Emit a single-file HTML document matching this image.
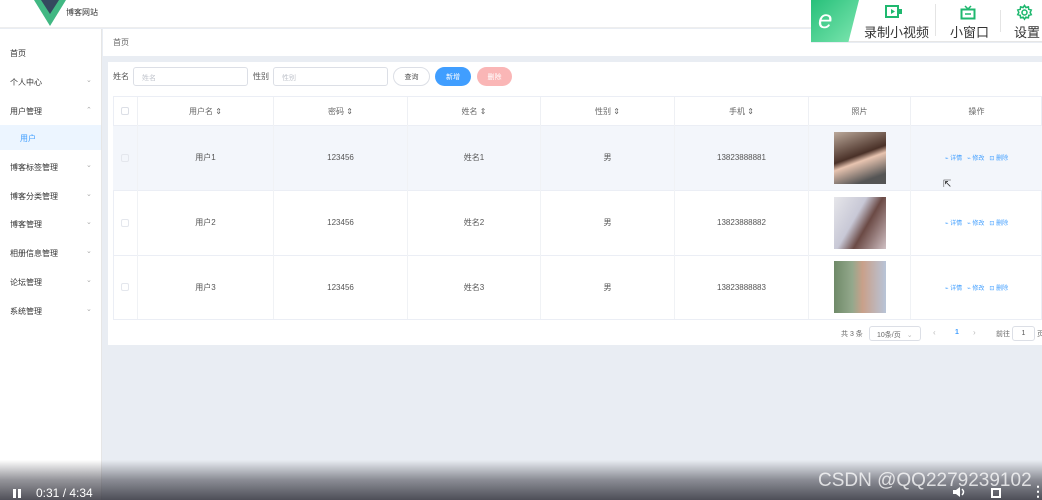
<!DOCTYPE html>
<html><head><meta charset="utf-8"><style>
*{margin:0;padding:0;box-sizing:border-box}
html,body{width:1042px;height:500px;overflow:hidden}
body{background:#e9edf3;font-family:"Liberation Sans","Noto Sans CJK SC",sans-serif;font-size:8px;color:#555;position:relative;white-space:nowrap}
.a{position:absolute}
.c{display:flex;align-items:center;justify-content:center}
.side div.i{position:absolute;left:10px;font-size:8px;color:#333}
.side span.ar{position:absolute;left:86px;color:#aaa;font-size:7px}
.th{position:absolute;top:97px;height:28px;border-right:1px solid #eef0f4;display:flex;align-items:center;justify-content:center;color:#666}
.td{position:absolute;display:flex;align-items:center;justify-content:center;color:#555;border-right:1px solid #f0f2f5}
.op{color:#409eff;font-size:6px}
</style></head><body>
<div class="a" style="left:0;top:0;width:1042px;height:28px;background:#fff;border-bottom:1px solid #eee"></div>
<svg class="a" style="left:34px;top:0" width="32" height="26" viewBox="0 0 32 26"><polygon points="0,0 32,0 16,26" fill="#41b883"/><polygon points="7,0 25,0 16,14" fill="#34495e"/></svg>
<div class="a" style="left:66px;top:7px;font-size:8px;color:#333">博客网站</div>
<div class="a" style="left:811px;top:0;width:231px;height:42px;background:#fff;border-bottom:1px solid #e6e6e6"></div>
<div class="a" style="left:811px;top:0;width:48px;height:42px;background:linear-gradient(135deg,#27c07a,#7ee6b0);clip-path:polygon(0 0,100% 0,78% 100%,0 100%)"></div>
<div class="a" style="left:818px;top:4px;font-size:26px;color:#fff;font-style:italic">e</div>
<svg class="a" style="left:885px;top:5px" width="18" height="14"><rect x="1" y="1" width="12" height="11" fill="none" stroke="#1fb86f" stroke-width="2"/><polygon points="6,4 6,9 10,6.5" fill="#1fb86f"/><rect x="14" y="4" width="3" height="5" fill="#1fb86f"/></svg>
<div class="a" style="left:864px;top:22px;font-size:13px;color:#333">录制小视频</div>
<div class="a" style="left:935px;top:4px;width:1px;height:32px;background:#e4e4e4"></div>
<svg class="a" style="left:960px;top:4px" width="16" height="16"><path d="M5 2 L8 5 L11 2" stroke="#1fb86f" stroke-width="1.5" fill="none"/><rect x="1.5" y="5.5" width="13" height="9" fill="none" stroke="#1fb86f" stroke-width="2"/><line x1="5" y1="10" x2="11" y2="10" stroke="#1fb86f" stroke-width="1.5"/></svg>
<div class="a" style="left:950px;top:22px;font-size:13px;color:#333">小窗口</div>
<div class="a" style="left:1000px;top:10px;width:1px;height:22px;background:#e4e4e4"></div>
<svg class="a" style="left:1016px;top:4px" width="17" height="17" viewBox="0 0 24 24"><path d="M12 2l2 3 3.5-1 .5 3.5 3.5 1-1.5 3.5 1.5 3-3.5 1-.5 3.5-3.5-1-2 3-2-3-3.5 1-.5-3.5-3.5-1 1.5-3-1.5-3.5 3.5-1 .5-3.5 3.5 1z" fill="none" stroke="#1fb86f" stroke-width="2.2"/><circle cx="12" cy="12" r="3.5" fill="none" stroke="#1fb86f" stroke-width="2.2"/></svg>
<div class="a" style="left:1014px;top:22px;font-size:13px;color:#333">设置</div>
<div class="a side" style="left:0;top:29px;width:102px;height:471px;background:#fff;border-right:1px solid #e6e6e6">
<div class="i" style="top:19px">首页</div>
<div class="i" style="top:48px">个人中心</div><span class="ar" style="top:47px">⌄</span>
<div class="i" style="top:77px">用户管理</div><span class="ar" style="top:77px">⌃</span>
<div style="position:absolute;left:0;top:96px;width:101px;height:25px;background:#ecf5ff"></div>
<div class="i" style="top:104px;left:20px;color:#409eff">用户</div>
<div class="i" style="top:133px">博客标签管理</div><span class="ar" style="top:132px">⌄</span>
<div class="i" style="top:162px">博客分类管理</div><span class="ar" style="top:161px">⌄</span>
<div class="i" style="top:190px">博客管理</div><span class="ar" style="top:189px">⌄</span>
<div class="i" style="top:219px">相册信息管理</div><span class="ar" style="top:218px">⌄</span>
<div class="i" style="top:248px">论坛管理</div><span class="ar" style="top:247px">⌄</span>
<div class="i" style="top:277px">系统管理</div><span class="ar" style="top:276px">⌄</span>
</div>
<div class="a" style="left:103px;top:29px;width:708px;height:27px;background:#fff"></div>
<div class="a" style="left:811px;top:43px;width:231px;height:13px;background:#fff"></div>
<div class="a" style="left:113px;top:37px;color:#666">首页</div>
<div class="a" style="left:108px;top:62px;width:934px;height:283px;background:#fff"></div>
<div class="a" style="left:113px;top:71px;color:#555">姓名</div>
<div class="a" style="left:133px;top:67px;width:115px;height:19px;border:1px solid #dcdfe6;border-radius:3px;padding:5px 8px;color:#c0c4cc;font-size:7px">姓名</div>
<div class="a" style="left:253px;top:71px;color:#555">性别</div>
<div class="a" style="left:273px;top:67px;width:115px;height:19px;border:1px solid #dcdfe6;border-radius:3px;padding:5px 8px;color:#c0c4cc;font-size:7px">性别</div>
<div class="a c" style="left:393px;top:67px;width:37px;height:19px;border:1px solid #dcdfe6;border-radius:10px;font-size:7px;color:#555">查询</div>
<div class="a c" style="left:435px;top:67px;width:36px;height:19px;background:#409eff;border-radius:10px;font-size:7px;color:#fff">新增</div>
<div class="a c" style="left:477px;top:67px;width:35px;height:19px;background:#fab6b6;border-radius:10px;font-size:7px;color:#fff">删除</div>
<div class="a" style="left:113px;top:96px;width:929px;height:224px;border:1px solid #ebeef5"></div>
<div class="a" style="left:113px;top:125px;width:929px;height:65px;background:#f3f6fb"></div>
<div class="a" style="left:113px;top:190px;width:929px;height:1px;background:#ebeef5"></div>
<div class="a" style="left:113px;top:255px;width:929px;height:1px;background:#ebeef5"></div>
<div class="a" style="left:113px;top:125px;width:929px;height:1px;background:#ebeef5"></div>
<div class="th" style="left:113px;width:25px"><span style="width:8px;height:8px;border:1px solid #dcdfe6;border-radius:2px"></span></div>
<div class="th" style="left:138px;width:136px">用户名 ⇕</div>
<div class="th" style="left:274px;width:134px">密码 ⇕</div>
<div class="th" style="left:408px;width:133px">姓名 ⇕</div>
<div class="th" style="left:541px;width:134px">性别 ⇕</div>
<div class="th" style="left:675px;width:134px">手机 ⇕</div>
<div class="th" style="left:809px;width:102px">照片</div>
<div class="th" style="left:911px;width:131px;border:none">操作</div>

<div class="td" style="left:113px;top:125px;width:25px;height:65px"><span style="width:8px;height:8px;border:1px solid #e4e7ed;border-radius:2px"></span></div>
<div class="td" style="left:138px;top:125px;width:136px;height:65px">用户1</div>
<div class="td" style="left:274px;top:125px;width:134px;height:65px">123456</div>
<div class="td" style="left:408px;top:125px;width:133px;height:65px">姓名1</div>
<div class="td" style="left:541px;top:125px;width:134px;height:65px">男</div>
<div class="td" style="left:675px;top:125px;width:134px;height:65px">13823888881</div>
<div class="td" style="left:809px;top:125px;width:102px;height:65px"><div style="width:52px;height:52px;background:linear-gradient(160deg,#bba99b 0%,#4a3128 45%,#e8c4b0 55%,#555 85%)"></div></div>
<div class="td op" style="left:911px;top:125px;width:131px;height:65px;border:none">⌁ 详情 &nbsp; ⌁ 修改 &nbsp; ⊡ 删除</div>

<div class="td" style="left:113px;top:190px;width:25px;height:65px"><span style="width:8px;height:8px;border:1px solid #e4e7ed;border-radius:2px"></span></div>
<div class="td" style="left:138px;top:190px;width:136px;height:65px">用户2</div>
<div class="td" style="left:274px;top:190px;width:134px;height:65px">123456</div>
<div class="td" style="left:408px;top:190px;width:133px;height:65px">姓名2</div>
<div class="td" style="left:541px;top:190px;width:134px;height:65px">男</div>
<div class="td" style="left:675px;top:190px;width:134px;height:65px">13823888882</div>
<div class="td" style="left:809px;top:190px;width:102px;height:65px"><div style="width:52px;height:52px;background:linear-gradient(120deg,#e6e6ea 0%,#c8c8d6 40%,#6b4a45 60%,#d0c0c4 100%)"></div></div>
<div class="td op" style="left:911px;top:190px;width:131px;height:65px;border:none">⌁ 详情 &nbsp; ⌁ 修改 &nbsp; ⊡ 删除</div>

<div class="td" style="left:113px;top:255px;width:25px;height:64px"><span style="width:8px;height:8px;border:1px solid #e4e7ed;border-radius:2px"></span></div>
<div class="td" style="left:138px;top:255px;width:136px;height:64px">用户3</div>
<div class="td" style="left:274px;top:255px;width:134px;height:64px">123456</div>
<div class="td" style="left:408px;top:255px;width:133px;height:64px">姓名3</div>
<div class="td" style="left:541px;top:255px;width:134px;height:64px">男</div>
<div class="td" style="left:675px;top:255px;width:134px;height:64px">13823888883</div>
<div class="td" style="left:809px;top:255px;width:102px;height:64px"><div style="width:52px;height:52px;background:linear-gradient(90deg,#6f8a68 0%,#93a88c 35%,#c9a08a 55%,#b8c4d8 100%)"></div></div>
<div class="td op" style="left:911px;top:255px;width:131px;height:64px;border:none">⌁ 详情 &nbsp; ⌁ 修改 &nbsp; ⊡ 删除</div>

<div class="a" style="left:841px;top:329px;font-size:7px;color:#666">共 3 条</div>
<div class="a" style="left:869px;top:326px;width:52px;height:15px;border:1px solid #dcdfe6;border-radius:3px;font-size:7px;padding:3px 7px;color:#666">10条/页 <span style="color:#bbb;margin-left:4px">⌄</span></div>
<div class="a" style="left:933px;top:328px;font-size:8px;color:#bbb">‹</div>
<div class="a" style="left:955px;top:329px;font-size:7px;color:#409eff;font-weight:bold">1</div>
<div class="a" style="left:973px;top:328px;font-size:8px;color:#bbb">›</div>
<div class="a" style="left:996px;top:329px;font-size:7px;color:#666">前往</div>
<div class="a c" style="left:1012px;top:326px;width:23px;height:15px;border:1px solid #dcdfe6;border-radius:3px;font-size:7px">1</div>
<div class="a" style="left:1037px;top:329px;font-size:7px;color:#666">页</div>
<div class="a" style="left:0;top:460px;width:1042px;height:40px;background:linear-gradient(180deg,rgba(60,60,70,0) 0%,rgba(60,60,70,.55) 50%,rgba(50,50,60,.85) 100%)"></div>
<div class="a" style="left:13px;top:489px;width:3px;height:9px;background:#fff"></div>
<div class="a" style="left:18px;top:489px;width:3px;height:9px;background:#fff"></div>
<div class="a" style="left:36px;top:486px;font-size:12px;color:#fff">0:31 / 4:34</div>
<div class="a" style="left:818px;top:470px;font-size:19px;color:rgba(255,255,255,.75);white-space:nowrap">CSDN @QQ2279239102</div>
<svg class="a" style="left:952px;top:486px" width="14" height="12"><polygon points="1,4 4,4 8,1 8,11 4,8 1,8" fill="#fff"/><path d="M10 3 Q13 6 10 9" stroke="#fff" stroke-width="1.5" fill="none"/></svg>
<div class="a" style="left:991px;top:488px;width:10px;height:10px;border:2px dashed #fff"></div>
<div class="a" style="left:1031px;top:483px;font-size:14px;color:#fff;font-weight:bold">⋮</div>
<div class="a" style="left:943px;top:179px;font-size:10px;color:#333">⇱</div>
</body></html>
